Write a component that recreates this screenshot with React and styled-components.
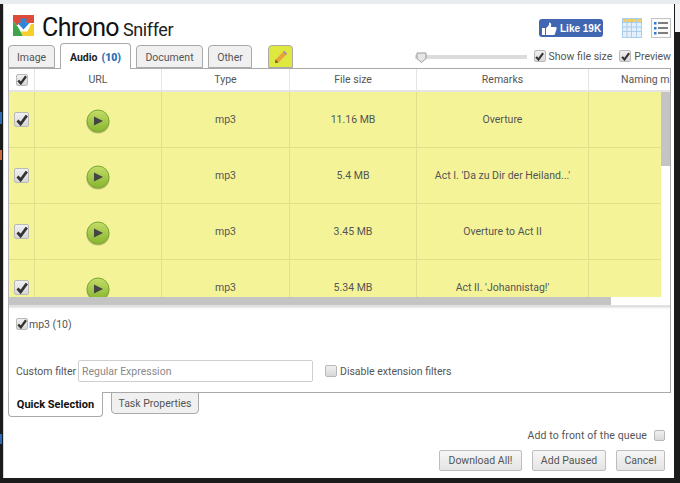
import React from "react";
import styled, { createGlobalStyle } from "styled-components";

const Global = createGlobalStyle`
  html, body { margin: 0; padding: 0; background: #1b1b1b; }
  * { box-sizing: border-box; }
`;

const Page = styled.div`
  width: 680px;
  height: 483px;
  overflow: hidden;
  padding: 4px 5px 5px 3px;
  font-family: Roboto, "Open Sans", sans-serif;
  font-size: 10.5px;
  color: #555;
  background:
    linear-gradient(#e9ecee, #e9ecee) 0 0 / 680px 4px no-repeat,
    linear-gradient(#f3f4f5, #f3f4f5) 675px 0 / 5px 32px no-repeat,
    linear-gradient(#2a6bb5, #2a6bb5) 0 112px / 2px 12px no-repeat,
    linear-gradient(#c96b3a, #c96b3a) 0 150px / 2px 10px no-repeat,
    linear-gradient(#2a6bb5, #2a6bb5) 0 434px / 2px 10px no-repeat,
    #1b1b1b;
`;

const Popup = styled.div`
  width: 671px;
  height: 474px;
  background: #fff;
  border-left: 1px solid #d8d8d8;
  padding: 0 3px 0 4px;
  display: flex;
  flex-direction: column;
`;

const Header = styled.header`
  height: 39px;
  display: flex;
  align-items: flex-start;
  padding: 11px 0 0 5px;
`;

const Brand = styled.h1`
  margin: 0 0 0 8px;
  font-family: Roboto, sans-serif;
  font-weight: 400;
  font-size: 25px;
  line-height: 26px;
  letter-spacing: -0.6px;
  color: #111;
  span {
    font-size: 18px;
    letter-spacing: -0.4px;
    margin-left: 4px;
    color: #222;
  }
`;

const HeaderRight = styled.div`
  margin-left: auto;
  display: flex;
  align-items: center;
  padding-top: 3px;
`;

const LikeButton = styled.div`
  width: 64px;
  height: 18px;
  margin-right: 19px;
  border-radius: 3px;
  background: #4267b2;
  color: #fff;
  font-family: "Liberation Sans", sans-serif;
  font-weight: 700;
  font-size: 10px;
  display: flex;
  align-items: center;
  gap: 3px;
  padding-left: 3px;
  white-space: nowrap;
`;

const ViewIcon = styled.svg`
  display: block;
  margin-left: ${(p) => p.$gap || 0}px;
`;

const TabBar = styled.div`
  height: 25px;
  display: flex;
  align-items: flex-end;
  gap: 5px;
`;

const Tab = styled.div`
  width: ${(p) => p.$w}px;
  height: ${(p) => (p.$active ? 26 : 23)}px;
  margin-bottom: ${(p) => (p.$active ? -1 : 0)}px;
  padding-top: 1px;
  border: 1px solid #a9a9a9;
  border-bottom: ${(p) => (p.$active ? "none" : "1px solid #a9a9a9")};
  border-radius: 4px 4px 0 0;
  background: ${(p) => (p.$active ? "#fff" : "#f0f0f0")};
  color: ${(p) => (p.$active ? "#222" : "#555")};
  font-weight: ${(p) => (p.$active ? 700 : 400)};
  display: flex;
  align-items: center;
  justify-content: center;
  position: relative;
  z-index: 1;
  white-space: nowrap;
  b { color: #2a6db5; margin-left: 4px; }
`;

const PencilTab = styled(Tab)`
  width: 25px;
  margin-left: 11px;
  background: #dfe83f;
`;

const Tools = styled.div`
  margin-left: auto;
  display: flex;
  align-items: center;
  align-self: flex-start;
  height: 14px;
  margin-top: 6px;
`;

const Slider = styled.div`
  width: 112px;
  height: 4px;
  margin-top: 2px;
  background: #dcdcdc;
  margin-right: 7px;
  position: relative;
`;

const Thumb = styled.svg`
  position: absolute;
  left: 1px;
  top: -3px;
`;

const Box = styled.span`
  width: ${(p) => p.$size || 12}px;
  height: ${(p) => p.$size || 12}px;
  flex: none;
  border: 1px solid #b9b9b9;
  border-radius: 2px;
  background: linear-gradient(#f0f0f0, #d8d8d8);
  display: inline-flex;
  align-items: center;
  justify-content: center;
`;

const Check = ({ size, on = true }) => (
  <Box $size={size}>
    {on && (
      <svg width={size ? size - 3 : 10} height={size ? size - 3 : 10} viewBox="0 0 12 12">
        <path d="M1.5 6.5 L4.6 10 L10.8 1.5" fill="none" stroke="#333" strokeWidth="2.8" />
      </svg>
    )}
  </Box>
);

const Option = styled.label`
  display: flex;
  align-items: center;
  gap: ${(p) => p.$gap ?? 4}px;
  margin-left: ${(p) => p.$left || 0}px;
  white-space: nowrap;
`;

const QueueOption = styled(Option)`
  letter-spacing: 0.12px;
`;

const Panel = styled.section`
  height: 325px;
  border: 1px solid #a9a9a9;
  border-left-color: #b5b5b5;
  display: flex;
  flex-direction: column;
`;

const columns = "26px 127px 128px 127px 172px 1fr";

const TableHead = styled.div`
  height: 23px;
  flex: none;
  display: grid;
  grid-template-columns: ${columns};
  border-bottom: 2px solid #e4e4e4;
  overflow: hidden;
`;

const HeadCell = styled.div`
  display: flex;
  align-items: center;
  justify-content: center;
  border-right: 1px solid #e4e4e4;
  white-space: nowrap;
  &:last-child { border-right: none; justify-content: flex-start; padding-left: 32px; }
`;

const TableBody = styled.div`
  height: 205px;
  flex: none;
  display: flex;
`;

const Rows = styled.div`
  flex: 1;
  overflow: hidden;
  background: #f4f398;
`;

const Row = styled.div`
  height: 56px;
  display: grid;
  grid-template-columns: ${columns};
  border-bottom: 1px solid #e0df8c;
`;

const Cell = styled.div`
  display: flex;
  align-items: center;
  justify-content: center;
  border-right: 1px solid #e0df8c;
  white-space: nowrap;
  &:last-child { border-right: none; }
`;

const PlayWrap = styled.span`
  display: block;
  margin-top: 4px;
  height: 25px;
`;

const VTrack = styled.div`
  width: 9px;
  flex: none;
  background: #fff;
`;

const VThumb = styled.div`
  height: 74px;
  background: #c4c4c4;
`;

const HTrack = styled.div`
  height: 9px;
  flex: none;
  background: #fff;
  border-bottom: 1px solid #e2e2e2;
`;

const HThumb = styled.div`
  width: 602px;
  height: 8px;
  background: #c4c4c4;
`;

const Filters = styled.div`
  flex: 1;
  box-shadow: inset 0 3px 3px -2px #ccc;
  padding: 11px 7px 0 7px;
`;

const TypeRow = styled.div`
  display: flex;
  align-items: center;
  height: 14px;
`;

const FilterRow = styled.div`
  display: flex;
  align-items: center;
  margin-top: 29px;
  height: 22px;
`;

const FilterLabel = styled.span`
  width: 62px;
  flex: none;
`;

const RegexInput = styled.input`
  width: 235px;
  height: 22px;
  margin: 0 12px 0 0;
  border: 1px solid #cfcfcf;
  border-radius: 2px;
  padding: 0 3px;
  font: inherit;
  &::placeholder { color: #8a8a8a; }
`;

const BottomTabs = styled.div`
  display: flex;
  gap: 8px;
  height: 25px;
`;

const BottomTab = styled.div`
  width: ${(p) => p.$w}px;
  height: ${(p) => (p.$active ? 25 : 22)}px;
  margin-top: -1px;
  border: 1px solid #a9a9a9;
  border-top: ${(p) => (p.$active ? "none" : "1px solid #a9a9a9")};
  border-radius: 0 0 4px 4px;
  background: ${(p) => (p.$active ? "#fff" : "#f0f0f0")};
  color: ${(p) => (p.$active ? "#111" : "#555")};
  font-weight: ${(p) => (p.$active ? 700 : 400)};
  font-size: ${(p) => (p.$active ? 11 : 10.5)}px;
  display: flex;
  align-items: center;
  justify-content: center;
  white-space: nowrap;
  position: relative;
`;

const Footer = styled.footer`
  flex: 1;
  display: flex;
  flex-direction: column;
  align-items: flex-end;
  padding: 11px 6px 0 0;
`;

const ButtonRow = styled.div`
  display: flex;
  gap: 10px;
  margin-top: 8px;
`;

const Button = styled.button`
  width: ${(p) => p.$w}px;
  height: 21px;
  padding: 0;
  border: 1px solid #bdbdbd;
  border-radius: 2px;
  background: linear-gradient(#f6f6f6, #e4e4e4);
  color: #555;
  font: inherit;
`;

const Logo = () => (
  <svg width="21" height="21" viewBox="0 0 21 21" style={{ flex: "none" }}>
    <rect width="21" height="21" fill="#fff" />
    <path d="M0 0H21V8H14L10.5 5L7 8L4 10.5L0 6Z" fill="#dd4b39" />
    <path d="M0 6L5 12L10 21H0Z" fill="#3ea54a" />
    <path d="M21 9V21H10L7.5 16.5H14.5L18 9Z" fill="#f6cf2b" />
    <path d="M7.6 3.500H13.4V8H16.5L10.5 14.500L4.5 8H7.6Z" fill="#2f86d6" />
  </svg>
);

const Play = () => (
  <svg width="24" height="25" viewBox="0 0 24 25">
    <defs>
      <linearGradient id="pg" x1="0" y1="0" x2="0" y2="1">
        <stop offset="0" stopColor="#c4dc6a" />
        <stop offset="1" stopColor="#86b52e" />
      </linearGradient>
    </defs>
    <ellipse cx="12" cy="13.4" rx="11.5" ry="11.2" fill="#b9b978" />
    <circle cx="12" cy="12" r="11" fill="url(#pg)" stroke="#7fa82f" />
    <path d="M8 7.5L17 12L8 16.5Z" fill="#444" />
  </svg>
);

const Thumbs = () => (
  <svg width="15" height="13" viewBox="0 0 15 13">
    <path
      fill="#fff"
      d="M0 6h3v7H0zM4 6.2 7 3V0.4c1.6 0 2.4 1.2 2.2 2.6L8.9 5H13.4c1 0 1.5 1 1.2 1.7L13 12c-.2.6-.7 1-1.3 1H4z"
    />
  </svg>
);

const GridIcon = () => (
  <ViewIcon width="20" height="20" viewBox="0 0 20 20">
    <rect x="0.5" y="0.5" width="19" height="19" fill="#e4effa" stroke="#a9cdec" />
    <rect x="1" y="1" width="18" height="3" fill="#f2cf62" />
    <path
      d="M5 1V19M9.500 1V19M14.500 1V19M1 4.500H19M1 9H19M1 13.500H19"
      stroke="#a9cdec"
      fill="none"
    />
  </ViewIcon>
);

const ListIcon = () => (
  <ViewIcon $gap={9} width="20" height="20" viewBox="0 0 20 20">
    <rect x="0.500" y="0.500" width="19" height="19" fill="#fbfbfb" stroke="#c4c4c4" />
    <path d="M7 5H17M7 10H17M7 15H17" stroke="#555" strokeWidth="1.500" />
    <path d="M3 4h2.500v2.500H3zM3 9h2.500v2.500H3zM3 14h2.500v2.500H3z" fill="#2a7fd0" />
  </ViewIcon>
);

const Pencil = () => (
  <svg width="14" height="14" viewBox="0 0 14 14">
    <path d="M1 13L1.500 9.500L10.200 0.800L13.200 3.800L4.500 12.500Z" fill="#e8a33a" />
    <path d="M1 13L1.500 9.500L4.500 12.500Z" fill="#6b5a2c" />
    <path d="M10.200 0.800L13.200 3.800L12 5L9 2Z" fill="#a58fb0" />
  </svg>
);

const tracks = [
  ["11.16 MB", "Overture"],
  ["5.4 MB", "Act I. 'Da zu Dir der Heiland...'"],
  ["3.45 MB", "Overture to Act II"],
  ["5.34 MB", "Act II. 'Johannistag!'"],
];

export default function App() {
  return (
    <Page>
      <Global />
      <Popup>
        <Header>
          <Logo />
          <Brand>
            Chrono<span>Sniffer</span>
          </Brand>
          <HeaderRight>
            <LikeButton>
              <Thumbs />
              Like 19K
            </LikeButton>
            <GridIcon />
            <ListIcon />
          </HeaderRight>
        </Header>
        <TabBar>
          <Tab $w={47}>Image</Tab>
          <Tab $w={71} $active>
            Audio<b>(10)</b>
          </Tab>
          <Tab $w={67}>Document</Tab>
          <Tab $w={44}>Other</Tab>
          <PencilTab>
            <Pencil />
          </PencilTab>
          <Tools>
            <Slider>
              <Thumb width="11" height="11" viewBox="0 0 11 11">
                <path d="M1 1H10V6.500L5.500 10.500L1 6.500Z" fill="#e6e6e6" stroke="#9a9a9a" />
              </Thumb>
            </Slider>
            <Option $gap={3}>
              <Check size={12} />
              Show file size
            </Option>
            <Option $left={7} $gap={3}>
              <Check size={12} />
              Preview
            </Option>
          </Tools>
        </TabBar>
        <Panel>
          <TableHead>
            <HeadCell>
              <Check />
            </HeadCell>
            <HeadCell>URL</HeadCell>
            <HeadCell>Type</HeadCell>
            <HeadCell>File size</HeadCell>
            <HeadCell>Remarks</HeadCell>
            <HeadCell>Naming mask</HeadCell>
          </TableHead>
          <TableBody>
            <Rows>
              {tracks.map(([size, remark]) => (
                <Row key={remark}>
                  <Cell>
                    <Check size={15} />
                  </Cell>
                  <Cell>
                    <PlayWrap>
                      <Play />
                    </PlayWrap>
                  </Cell>
                  <Cell>mp3</Cell>
                  <Cell>{size}</Cell>
                  <Cell>{remark}</Cell>
                  <Cell />
                </Row>
              ))}
            </Rows>
            <VTrack>
              <VThumb />
            </VTrack>
          </TableBody>
          <HTrack>
            <HThumb />
          </HTrack>
          <Filters>
            <TypeRow>
              <Option $gap={1}>
                <Check />
                mp3 (10)
              </Option>
            </TypeRow>
            <FilterRow>
              <FilterLabel>Custom filter</FilterLabel>
              <RegexInput placeholder="Regular Expression" />
              <Option $gap={3}>
                <Check on={false} />
                Disable extension filters
              </Option>
            </FilterRow>
          </Filters>
        </Panel>
        <BottomTabs>
          <BottomTab $w={95} $active>
            Quick Selection
          </BottomTab>
          <BottomTab $w={88}>Task Properties</BottomTab>
        </BottomTabs>
        <Footer>
          <QueueOption $gap={7}>
            Add to front of the queue
            <Check size={11} on={false} />
          </QueueOption>
          <ButtonRow>
            <Button $w={83}>Download All!</Button>
            <Button $w={74}>Add Paused</Button>
            <Button $w={49}>Cancel</Button>
          </ButtonRow>
        </Footer>
      </Popup>
    </Page>
  );
}
